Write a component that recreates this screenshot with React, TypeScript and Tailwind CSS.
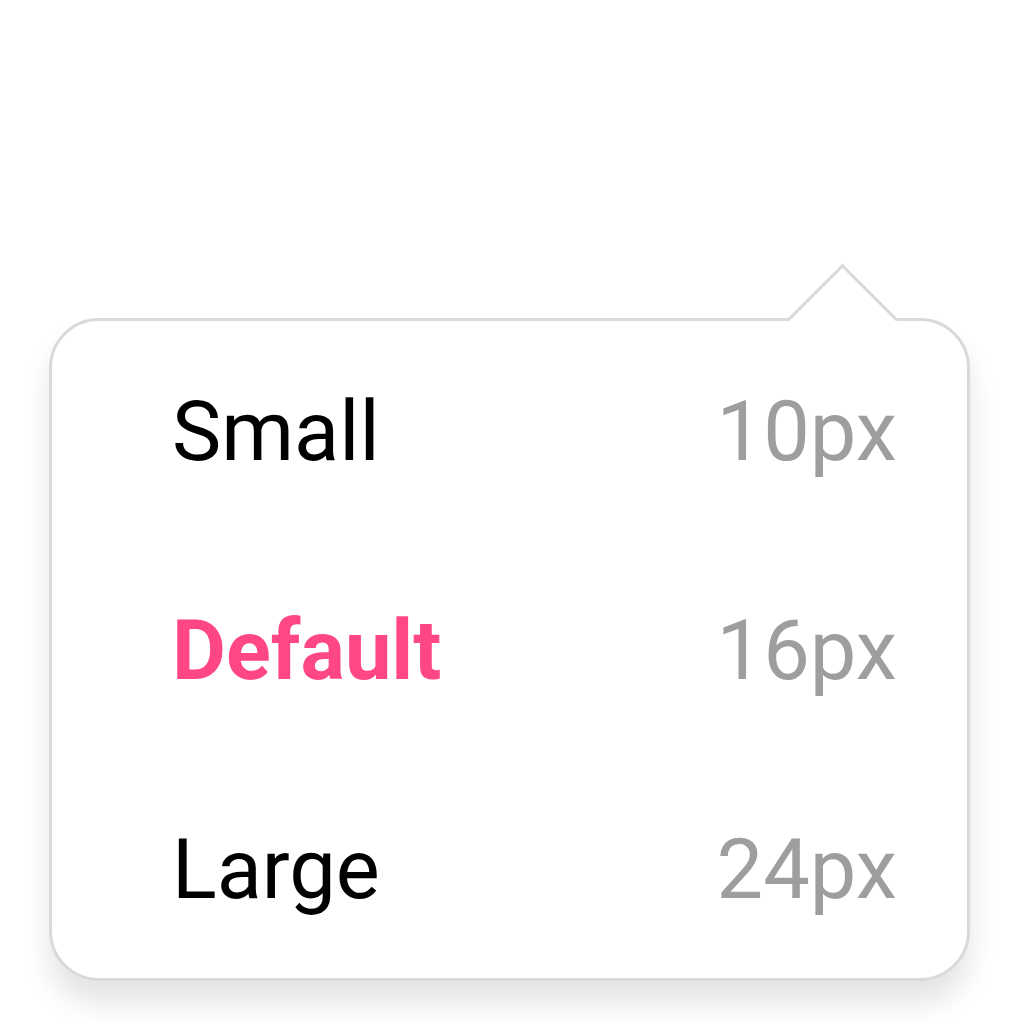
import React from 'react';

const sizes = [
  { label: 'Small', value: '10px', active: false },
  { label: 'Default', value: '16px', active: true },
  { label: 'Large', value: '24px', active: false },
];

export default function App() {
  return (
    <div className="w-[1024px] h-[1024px] bg-white pt-[318px] pl-[49px] font-['Roboto',sans-serif]">
      <div className="relative w-[921px]">
        <div className="relative flex flex-col h-[663px] rounded-[50px] border-[3px] border-[#d9d9d9] bg-white shadow-[0_22px_28px_rgba(0,0,0,0.11)] pl-[120px] pr-[70px]">
          {sizes.map((s) => (
            <div key={s.label} className="flex-1 flex items-center justify-between text-[83px] leading-none pt-[2px]">
              <span className={s.active ? 'font-bold text-[#ff4785]' : 'text-black'}>{s.label}</span>
              <span className="text-[#9e9e9e]">{s.value}</span>
            </div>
          ))}
        </div>
        {/* caret */}
        <div className="absolute left-[754px] top-[-38px] w-[79px] h-[79px] rotate-45 bg-white border-t-[3px] border-l-[3px] border-[#d9d9d9]" />
      </div>
    </div>
  );
}
